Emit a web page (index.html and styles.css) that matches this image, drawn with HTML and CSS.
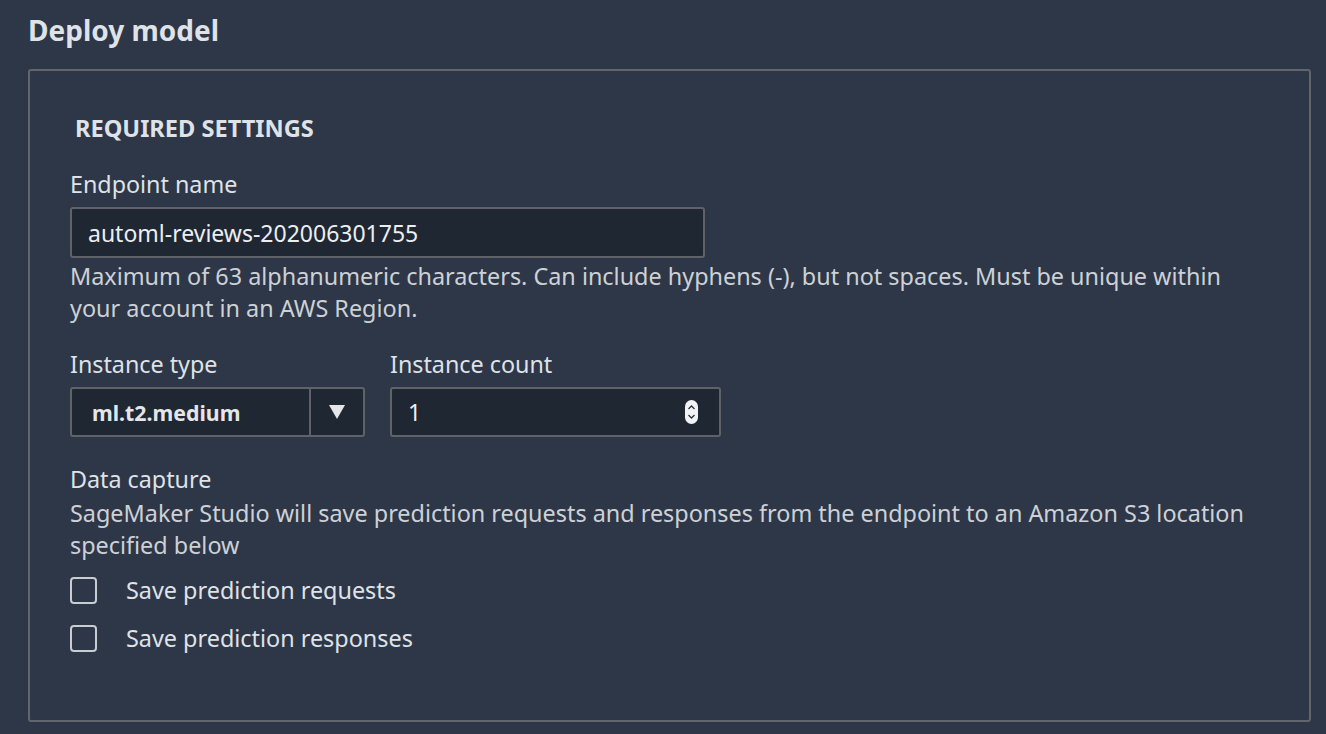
FILE: index.html
```html
<!DOCTYPE html>
<html>
<head>
<meta charset="utf-8">
<link rel="stylesheet" href="styles.css">
</head>
<body>
<div class="page">
  <h1 class="title">Deploy model</h1>
  <div class="panel">
    <h2 class="section">REQUIRED SETTINGS</h2>
    <div class="field">
      <div class="label">Endpoint name</div>
      <div class="input wide">automl-reviews-202006301755</div>
      <div class="help">Maximum of 63 alphanumeric characters. Can include hyphens (-), but not spaces. Must be unique within your account in an AWS Region.</div>
    </div>
    <div class="row">
      <div class="col">
        <div class="label">Instance type</div>
        <div class="select">
          <div class="select-value">ml.t2.medium</div>
          <div class="select-btn">
            <svg width="16" height="14" viewBox="0 0 16 14"><polygon points="0,0 16,0 8,14" fill="#e4e6e9"/></svg>
          </div>
        </div>
      </div>
      <div class="col">
        <div class="label">Instance count</div>
        <div class="input number">
          <span>1</span>
          <svg class="spin" width="13" height="24" viewBox="0 0 13 24">
            <rect x="0" y="0" width="13" height="24" rx="6.5" fill="#f2f3f4"/>
            <polyline points="3.5,9 6.5,6 9.5,9" fill="none" stroke="#2a3240" stroke-width="1.3"/>
            <polyline points="3.5,15 6.5,18 9.5,15" fill="none" stroke="#2a3240" stroke-width="1.3"/>
          </svg>
        </div>
      </div>
    </div>
    <div class="capture">
      <div class="label tight">Data capture</div>
      <div class="help">SageMaker Studio will save prediction requests and responses from the endpoint to an Amazon S3 location specified below</div>
    </div>
    <div class="checks">
      <label class="check"><span class="box"></span><span>Save prediction requests</span></label>
      <label class="check"><span class="box"></span><span>Save prediction responses</span></label>
    </div>
  </div>
</div>
</body>
</html>
```

FILE: styles.css
```css
html, body {
  margin: 0;
  padding: 0;
  background: #2e3748;
}
body {
  font-family: "Noto Sans", "Open Sans", sans-serif;
  color: #d5d9de;
  width: 1326px;
  height: 734px;
  overflow: hidden;
}
.page {
  padding: 11px 15px 0 28px;
}
.title {
  margin: 0;
  font-size: 28px;
  font-weight: 700;
  line-height: 38px;
  color: #dfe2e6;
}
.panel {
  margin-top: 20px;
  border: 2px solid #62656b;
  border-radius: 3px;
  height: 653px;
  box-sizing: border-box;
  padding: 40px 40px 0 40px;
}
.section {
  margin: 0 0 0 5px;
  font-size: 23.6px;
  font-weight: 700;
  line-height: 34px;
  color: #dfe2e6;
  letter-spacing: 0;
}
.field {
  margin-top: 25px;
}
.label {
  font-size: 23.3px;
  line-height: 28px;
  color: #dfe2e6;
  margin-bottom: 9px;
}
.label.tight {
  margin-bottom: 0;
  line-height: 32px;
}
.input {
  box-sizing: border-box;
  height: 51px;
  background: #1f2733;
  border: 2px solid #5f6268;
  border-radius: 3px;
  display: flex;
  align-items: center;
  padding-left: 16px;
  font-size: 23px;
  color: #eceef0;
}
.input.wide {
  width: 635px;
}
.help {
  font-size: 23.4px;
  line-height: 32px;
  color: #cdd1d6;
  margin-top: 2px;
  width: 1185px;
}
.row {
  display: flex;
  gap: 25px;
  margin-top: 26px;
}
.select {
  box-sizing: border-box;
  width: 295px;
  height: 50px;
  background: #1f2733;
  border: 2px solid #5f6268;
  border-radius: 3px;
  display: flex;
}
.select-value {
  flex: 1;
  display: flex;
  align-items: center;
  padding-left: 20px;
  font-size: 21.3px;
  font-weight: 700;
  color: #e4e6e9;
  border-right: 2px solid #5f6268;
}
.select-btn {
  width: 52px;
  display: flex;
  align-items: center;
  justify-content: center;
}
.input.number {
  width: 331px;
  height: 50px;
  justify-content: space-between;
  padding-right: 21px;
}
.spin {
  display: block;
}
.capture {
  margin-top: 26px;
}
.checks {
  margin-top: 16px;
  display: flex;
  flex-direction: column;
  gap: 21px;
}
.check {
  display: flex;
  align-items: center;
  gap: 29px;
  font-size: 23.4px;
  line-height: 27px;
  color: #dfe2e6;
}
.box {
  box-sizing: border-box;
  width: 27px;
  height: 27px;
  border: 2px solid #c9ccd1;
  border-radius: 4px;
}
```
